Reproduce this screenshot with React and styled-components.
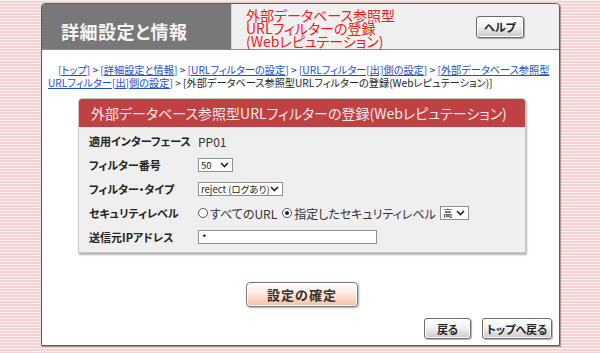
import React, {useState} from 'react';
import styled, {createGlobalStyle} from 'styled-components';

const GlobalStyle = createGlobalStyle`
  html, body {
    margin: 0;
    padding: 0;
  }
  body {
    width: 600px;
    height: 353px;
    overflow: hidden;
    font-family: "Noto Sans CJK JP", "Noto Sans", sans-serif;
    font-feature-settings: "palt";
    background: repeating-linear-gradient(
      to bottom,
      #fbeeee 0px, #fbeeee 1px,
      #f5d3d3 1px, #f5d3d3 3px
    );
  }
`

const crumbs = [
    'トップ',
    '詳細設定と情報',
    'URLフィルターの設定',
    'URLフィルター[出]側の設定',
    '外部データベース参照型URLフィルター[出]側の設定',
]

const Chevron = () => (
    <svg width="9" height="6" viewBox="0 0 9 6">
        <path d="M1 1 L4.5 4.5 L8 1" fill="none" stroke="#223" strokeWidth="1.6"/>
    </svg>
)

const App = () => {
    const [level, setLevel] = useState('custom')

    return (
        <>
            <GlobalStyle/>
            <Page>
                <Panel>
                    <Header>
                        <HeaderTitle>詳細設定と情報</HeaderTitle>
                        <HeaderInfo>
                            <PageName>
                                外部データベース参照型<br/>
                                URLフィルターの登録<br/>
                                (Webレピュテーション)
                            </PageName>
                            <GrayButton $w={48} $h={22}>ヘルプ</GrayButton>
                        </HeaderInfo>
                    </Header>
                    <Body>
                        <Breadcrumb>
                            {crumbs.map((c) => (
                                <React.Fragment key={c}>
                                    <a href="#">[{c}]</a>{' > '}
                                </React.Fragment>
                            ))}
                            [外部データベース参照型URLフィルターの登録(Webレピュテーション)]
                        </Breadcrumb>

                        <FormBox>
                            <FormTitle>外部データベース参照型URLフィルターの登録(Webレピュテーション)</FormTitle>
                            <Rows>
                                <Row>
                                    <Label>適用インターフェース</Label>
                                    <Value>PP01</Value>
                                </Row>
                                <Row>
                                    <Label>フィルター番号</Label>
                                    <Select $w={35}><span>50</span><Chevron/></Select>
                                </Row>
                                <Row>
                                    <Label>フィルター・タイプ</Label>
                                    <Select $w={85}><span>reject (ログあり)</span><Chevron/></Select>
                                </Row>
                                <Row>
                                    <Label>セキュリティレベル</Label>
                                    <Value>
                                        <Radio $on={level === 'all'} onClick={() => setLevel('all')}/>
                                        すべてのURL
                                        <Radio $on={level === 'custom'} onClick={() => setLevel('custom')} $gap/>
                                        指定したセキュリティレベル
                                        <Select $w={29} $ml={4}><span>高</span><Chevron/></Select>
                                    </Value>
                                </Row>
                                <Row>
                                    <Label>送信元IPアドレス</Label>
                                    <TextInput defaultValue="*"/>
                                </Row>
                            </Rows>
                        </FormBox>

                        <ConfirmRow>
                            <ConfirmButton>設定の確定</ConfirmButton>
                        </ConfirmRow>

                        <NavRow>
                            <GrayButton $w={47} $h={21}>戻る</GrayButton>
                            <GrayButton $w={70} $h={21}>トップへ戻る</GrayButton>
                        </NavRow>
                    </Body>
                </Panel>
            </Page>
        </>
    );
};

const Page = styled.div`
  padding: 3px 0 0 41px;
`

const Panel = styled.div`
  width: 517px;
  height: 341px;
  display: flex;
  flex-direction: column;
  background: white;
  border: 1px solid #5c5c5c;
  border-radius: 4px 4px 0 0;
  box-shadow: 1px 1px 1px rgba(0, 0, 0, 0.35);
  overflow: hidden;
`

const Header = styled.div`
  display: flex;
  height: 45px;
  border-bottom: 1px solid #8a8a8a;
`

const HeaderTitle = styled.div`
  width: 170px;
  padding-left: 19px;
  display: flex;
  align-items: center;
  padding-top: 8px;
  box-sizing: content-box;
  background: #787878;
  color: #f4f4f4;
  font-size: 18px;
  font-weight: bold;
  letter-spacing: 0.5px;
`

const HeaderInfo = styled.div`
  flex: 1;
  display: flex;
  align-items: center;
  justify-content: space-between;
  padding: 0 35px 0 14px;
  background: #f0f0f0;
  border-left: 1px solid #d8d8d8;
`

const PageName = styled.div`
  color: #ee1c1c;
  font-size: 14px;
  line-height: 13px;
  align-self: flex-start;
  padding-top: 5px;
`

const GrayButton = styled.button`
  width: ${p => p.$w}px;
  height: ${p => p.$h}px;
  padding: 0;
  font-family: inherit;
  font-feature-settings: "palt";
  font-size: 11px;
  font-weight: bold;
  color: #222;
  background: linear-gradient(to bottom, #ffffff 0%, #f2f2f2 45%, #c9c9c9 100%);
  border: 1px solid #6a6a6a;
  border-radius: 3px;
  box-shadow: inset 0 0 0 1px #fff, 1px 1px 1px rgba(0, 0, 0, 0.3);
  cursor: pointer;
`

const Body = styled.div`
  flex: 1;
  display: flex;
  flex-direction: column;
  padding: 14px 7px 6px 6px;
`

const Breadcrumb = styled.div`
  font-size: 10.2px;
  line-height: 12.5px;
  color: #222;
  text-indent: 10px;
  a {
    color: #1a4fd6;
    text-decoration: underline;
  }
`

const FormBox = styled.div`
  margin: 9px 0 0 30px;
  width: 446px;
  background: #efefef;
  border: 1px solid #c8c8c8;
  border-radius: 4px 4px 0 0;
  box-shadow: 1px 2px 2px rgba(0, 0, 0, 0.3);
  overflow: hidden;
`

const FormTitle = styled.div`
  height: 28px;
  display: flex;
  align-items: center;
  padding-left: 12px;
  background: #bf4141;
  color: #f6e8e8;
  font-size: 14px;
`

const Rows = styled.div`
  padding: 2px 0 3px 10px;
`

const Row = styled.div`
  display: flex;
  align-items: center;
  height: 24px;
`

const Label = styled.div`
  width: 109px;
  font-size: 11px;
  font-weight: bold;
  color: #222;
`

const Value = styled.div`
  display: flex;
  align-items: center;
  font-size: 12px;
  color: #333;
`

const Select = styled.div`
  width: ${p => p.$w}px;
  height: 14px;
  margin-left: ${p => p.$ml || 0}px;
  box-sizing: border-box;
  display: flex;
  align-items: center;
  justify-content: space-between;
  padding: 0 3px 0 2px;
  background: white;
  border: 1px solid #8e8e8e;
  font-size: 9.5px;
  color: #222;
`

const Radio = styled.span`
  position: relative;
  width: 10px;
  height: 10px;
  box-sizing: border-box;
  margin: 0 2px 0 ${p => p.$gap ? 5 : 0}px;
  border: 1px solid #555;
  border-radius: 50%;
  background: white;
  cursor: pointer;
  &::after {
    content: '';
    display: ${p => p.$on ? 'block' : 'none'};
    position: absolute;
    left: 2px;
    top: 2px;
    width: 4px;
    height: 4px;
    border-radius: 50%;
    background: #222;
  }
`

const TextInput = styled.input`
  width: 179px;
  height: 14px;
  box-sizing: border-box;
  padding: 0 3px;
  border: 1px solid #8e8e8e;
  font-family: inherit;
  font-size: 10px;
  outline: none;
`

const ConfirmRow = styled.div`
  display: flex;
  padding: 29px 0 0 198px;
`

const ConfirmButton = styled.button`
  width: 112px;
  height: 25px;
  padding: 0;
  font-family: inherit;
  font-feature-settings: "palt";
  font-size: 13px;
  font-weight: bold;
  color: #333;
  background: linear-gradient(to bottom, #ffffff 0%, #fde9de 45%, #f3bfa2 100%);
  border: 1px solid #7a7a7a;
  border-radius: 4px;
  box-shadow: inset 0 0 0 1px #fff, 1px 1px 2px rgba(0, 0, 0, 0.35);
  letter-spacing: 1px;
  cursor: pointer;
`

const NavRow = styled.div`
  margin-top: auto;
  display: flex;
  justify-content: flex-end;
  gap: 11px;
`

export default App;
